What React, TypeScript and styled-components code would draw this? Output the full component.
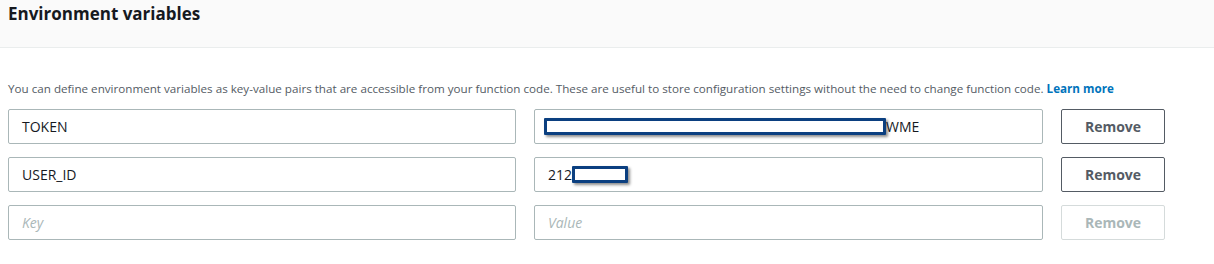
import React from 'react'
import styled, { createGlobalStyle } from 'styled-components'

interface EnvVar {
    key: string
    before?: string
    hidden: number
    after?: string
}

const variables: EnvVar[] = [
    { key: 'TOKEN', hidden: 342, after: 'WME' },
    { key: 'USER_ID', before: '212', hidden: 56 },
];

export default function App() {
    return (
        <>
            <GlobalStyle />
            <Panel>
                <Header>
                    <Title>Environment variables</Title>
                </Header>
                <Body>
                    <Description>
                        You can define environment variables as key-value pairs that are accessible from your function code.
                        These are useful to store configuration settings without the need to change function code.{' '}
                        <LearnMore href="#">Learn more</LearnMore>
                    </Description>
                    <Rows>
                        {variables.map((v) => (
                            <Row key={v.key}>
                                <Field>{v.key}</Field>
                                <Field>
                                    {v.before}
                                    <Redacted $width={v.hidden} $leading={!v.before} />
                                    {v.after}
                                </Field>
                                <RemoveButton>Remove</RemoveButton>
                            </Row>
                        ))}
                        <Row>
                            <Field $placeholder>Key</Field>
                            <Field $placeholder>Value</Field>
                            <RemoveButton disabled>Remove</RemoveButton>
                        </Row>
                    </Rows>
                </Body>
            </Panel>
        </>
    )
}

const GlobalStyle = createGlobalStyle`
    body {
        margin: 0;
        background: #ffffff;
        font-family: "Open Sans", "Liberation Sans", sans-serif;
        color: #16191f;
    }
`;

const Panel = styled.div`
    width: 1214px;
`;

const Header = styled.div`
    height: 48px;
    box-sizing: border-box;
    padding: 3px 8px 0;
    background: #fafafa;
    border-bottom: 1px solid #eaeded;
`;

const Title = styled.h2`
    margin: 0;
    font-size: 17px;
    line-height: 22px;
    font-weight: 700;
    color: #16191f;
`;

const Body = styled.div`
    padding: 32px 8px 0;
`;

const Description = styled.p`
    margin: 0 0 11px;
    font-size: 11.65px;
    line-height: 18px;
    color: #545b64;
    white-space: nowrap;
`;

const LearnMore = styled.a`
    color: #0073bb;
    font-weight: 700;
    text-decoration: none;
`;

const Rows = styled.div`
    display: flex;
    flex-direction: column;
    gap: 13px;
`;

const Row = styled.div`
    display: grid;
    grid-template-columns: 508px 509px 104px;
    column-gap: 18px;
`;

const Field = styled.div<{ $placeholder?: boolean }>`
    height: 35px;
    box-sizing: border-box;
    display: flex;
    align-items: center;
    padding: 0 13px;
    border: 1px solid #aab7b8;
    border-radius: 2px;
    font-size: 14px;
    color: ${(p) => (p.$placeholder ? '#aab7b8' : '#16191f')};
    font-style: ${(p) => (p.$placeholder ? 'italic' : 'normal')};
    white-space: nowrap;
`;

const Redacted = styled.span<{ $width: number; $leading?: boolean }>`
    display: inline-block;
    width: ${(p) => p.$width}px;
    height: 17px;
    margin-left: ${(p) => (p.$leading ? '-4px' : '0')};
    box-sizing: border-box;
    border: 3px solid #0b3f80;
    border-radius: 1px;
    background: #ffffff;
    box-shadow: 2px 2px 3px rgba(0, 0, 0, 0.45);
`;

const RemoveButton = styled.button`
    height: 35px;
    box-sizing: border-box;
    border: 1px solid ${(p) => (p.disabled ? '#d5dbdb' : '#545b64')};
    border-radius: 2px;
    background: #ffffff;
    font-family: inherit;
    font-size: 14px;
    font-weight: 700;
    color: ${(p) => (p.disabled ? '#aab7b8' : '#545b64')};
    padding: 0;
`;
